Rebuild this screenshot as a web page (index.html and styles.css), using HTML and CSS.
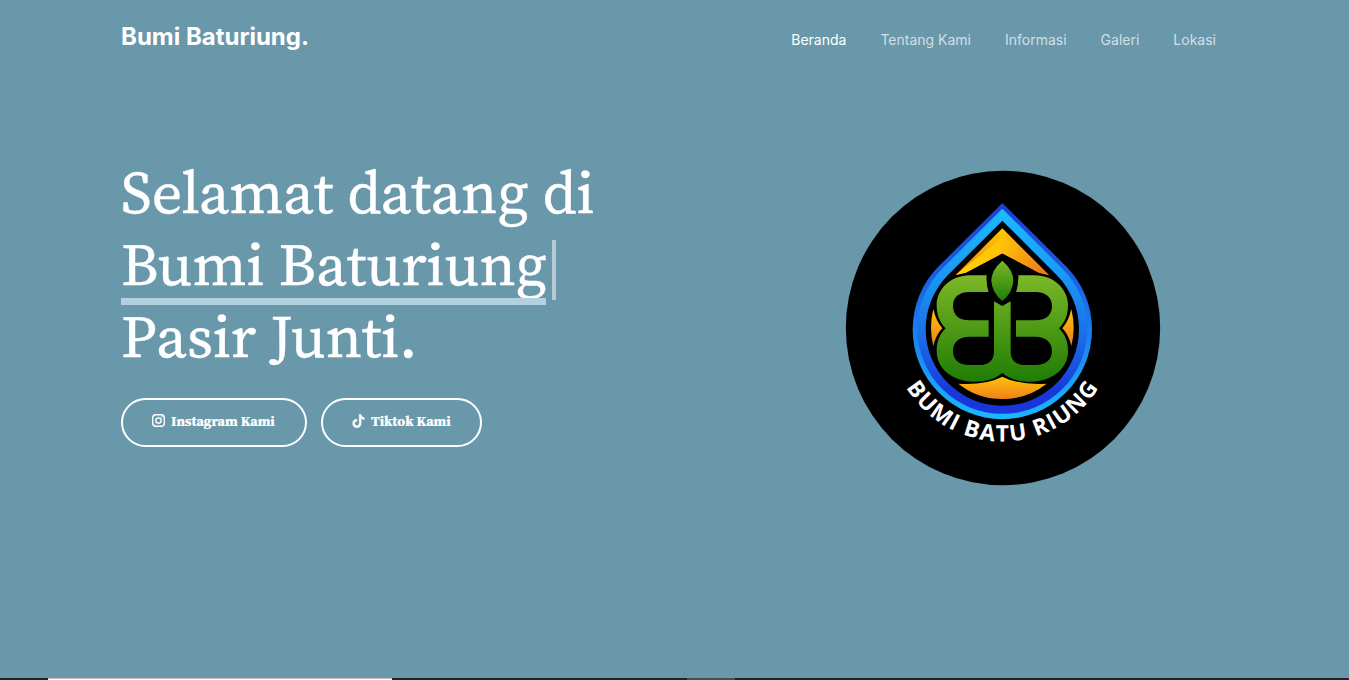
FILE: index.html
```
<!DOCTYPE html>
<html lang="id">
<head>
<meta charset="utf-8">
<title>Bumi Baturiung</title>
<link rel="stylesheet" href="styles.css">
</head>
<body>
<div class="page">
  <header class="header">
    <a class="brand">Bumi Baturiung.</a>
    <nav class="nav">
      <a class="nav-link active">Beranda</a>
      <a class="nav-link">Tentang Kami</a>
      <a class="nav-link">Informasi</a>
      <a class="nav-link">Galeri</a>
      <a class="nav-link">Lokasi</a>
    </nav>
  </header>
  <main class="hero">
    <div class="intro">
      <h1 class="title">
        <span class="line">Selamat datang di</span>
        <span class="line"><span class="typed">Bumi Baturiung</span><span class="cursor"></span></span>
        <span class="line">Pasir Junti.</span>
      </h1>
      <div class="actions">
        <a class="btn insta">
          <svg class="icon" viewBox="0 0 16 16" fill="none" stroke="currentColor" stroke-width="1.7"><rect x=".85" y=".85" width="14.3" height="14.3" rx="4"/><circle cx="8" cy="8" r="3.3"/><circle cx="12.3" cy="3.75" r="1" fill="currentColor" stroke="none"/></svg>
          <span class="label">Instagram Kami</span>
        </a>
        <a class="btn tiktok">
          <svg class="icon tall" viewBox="0 0 16 16" fill="currentColor"><path d="M9 0h1.98c.144.715.54 1.617 1.235 2.512C12.895 3.389 13.797 4 15 4v2c-1.753 0-3.07-.814-4-1.829V11a5 5 0 1 1-5-5v2a3 3 0 1 0 3 3z" stroke="currentColor" stroke-width=".9"/></svg>
          <span class="label">Tiktok Kami</span>
        </a>
      </div>
    </div>
    <svg class="emblem" viewBox="0 0 1020 1005">
      <defs>
        <linearGradient id="rim" x1="0" y1="0" x2="0" y2="1"><stop offset="0" stop-color="#1740d8"/><stop offset=".3" stop-color="#1b5be0"/><stop offset=".65" stop-color="#1a86f2"/><stop offset="1" stop-color="#1bb8ff"/></linearGradient>
        <linearGradient id="ring" x1="0" y1="0" x2="0" y2="1"><stop offset="0" stop-color="#1bbcff"/><stop offset=".3" stop-color="#1a9cf6"/><stop offset=".65" stop-color="#1a6ae6"/><stop offset=".9" stop-color="#1836da"/><stop offset="1" stop-color="#1836da"/></linearGradient>
        <linearGradient id="leaf" gradientUnits="userSpaceOnUse" x1="0" y1="346" x2="0" y2="665"><stop offset="0" stop-color="#7db728"/><stop offset="1" stop-color="#1e7d04"/></linearGradient>
        <linearGradient id="bud" x1="0" y1="0" x2="0" y2="1"><stop offset="0" stop-color="#7db728"/><stop offset="1" stop-color="#1e8008"/></linearGradient>
        <linearGradient id="gold" x1="0" y1="0" x2="0" y2="1"><stop offset="0" stop-color="#ffc20a"/><stop offset="1" stop-color="#f08018"/></linearGradient>
        <linearGradient id="roof" gradientUnits="userSpaceOnUse" x1="450" y1="240" x2="610" y2="345"><stop offset="0" stop-color="#ffd200"/><stop offset=".3" stop-color="#ffc008"/><stop offset="1" stop-color="#ee7c18"/></linearGradient>
        <linearGradient id="edge" gradientUnits="userSpaceOnUse" x1="502" y1="205" x2="502" y2="345"><stop offset="0" stop-color="#ffca08"/><stop offset="1" stop-color="#f08018"/></linearGradient>
        <path id="arc" d="M213 682A338 338 0 0 0 791 682"/>
      </defs>
      <circle cx="504" cy="504" r="471.5"/>
      <path fill="url(#rim)" d="M502 129L692 318A269 269 0 1 1 312 318Z"/>
      <path fill="url(#ring)" d="M502 146L683 327A255 255 0 1 1 321 327Z"/>
      <path d="M502 182L665 345A230 230 0 1 1 339 345Z"/>
      <path fill="url(#edge)" d="M502 205L642 345L612 338L502 280L392 338L362 345Z"/>
      <path fill="url(#roof)" d="M502 232L642 345L612 338L502 280L392 338L362 345Z"/>
      <path fill="url(#gold)" d="M295 447Q303 483 322 505Q303 524 295 558Q281 505 295 447Z"/>
      <path fill="url(#gold)" d="M709 447Q701 483 682 505Q701 524 709 558Q723 505 709 447Z"/>
      <path fill="url(#gold)" d="M370 671Q452 676 502 650Q552 676 635 671Q577 717 502 717Q427 717 370 671Z"/>
      <path fill="url(#leaf)" fill-rule="evenodd" d="M455 346H405C345 346 305 390 305 435C305 467 315 488 332 505C315 522 305 542 305 574C305 626 353 665 415 665C452 665 482 657 502 638C522 657 552 665 589 665C651 665 699 626 699 574C699 542 689 522 672 505C689 488 699 467 699 435C699 390 659 346 599 346H550Q551 375 543 396H600C636 396 651 415 651 438C651 462 636 481 600 481H543V530H600C636 530 651 550 651 573C651 597 635 615 600 615H570C545 615 527 602 527 575V424L502 438L477 424V575C477 602 459 615 434 615H404C369 615 354 597 354 573C354 550 368 530 404 530H461V481H404C368 481 354 462 354 438C354 415 368 396 404 396H461Q453 375 455 346Z"/>
      <path fill="url(#bud)" d="M502 302Q535 331 535 362Q533 397 502 423Q471 397 469 362Q469 331 502 302Z"/>
      <text class="motto" textLength="692" lengthAdjust="spacing"><textPath href="#arc" textLength="692">BUMI BATU RIUNG</textPath></text>
    </svg>
  </main>
  <footer class="strip"><span class="panel"></span><span class="handle"></span></footer>
</div>
</body>
</html>
```
FILE: styles.css
```
* { box-sizing: border-box; }
body { margin: 0; background: #6998ab; color: #fff; font-family: Inter, sans-serif; }
.page { height: 680px; display: flex; flex-direction: column; overflow: hidden; }
.header { height: 80px; padding: 22px 133px 0 121px; display: flex; justify-content: space-between; align-items: flex-start; }
.brand { font-size: 24px; font-weight: 700; line-height: 29px; }
.nav { display: flex; gap: 34px; padding-top: 7px; font-size: 14px; line-height: 21px; }
.nav-link { color: rgba(255, 255, 255, .7); }
.nav-link.active { color: #fff; }
.hero { flex: 1; display: flex; justify-content: space-between; align-items: flex-start; padding: 76px 174px 0 121px; }
.title { margin: 0; font: 400 60px/72px "Source Serif 4", "Source Serif Pro", "Liberation Serif", serif; -webkit-text-stroke: .4px #fff; }
.line { display: flex; white-space: nowrap; height: 72px; }
.typed { position: relative; width: 425px; }
.typed::after { content: ""; position: absolute; left: 0; right: 0; bottom: -5px; height: 7px; background: #b1d0e0; }
.cursor { width: 4px; height: 60px; margin: 12px 0 0 6px; background: #b4cbd5; }
.actions { display: flex; gap: 14px; margin-top: 26px; }
.btn { display: flex; align-items: center; gap: 6px; height: 49px; border: 2px solid #fff; border-radius: 25px; padding: 0 0 3px 29px; font: 700 14px/20px "Source Serif 4", "Source Serif Pro", "Liberation Serif", serif; white-space: nowrap; }
.insta { width: 186px; }
.tiktok { width: 161px; }
.label { -webkit-text-stroke: .2px #fff; }
.icon { width: 13px; height: 13px; margin-bottom: 1px; }
.tall { height: 14px; }
.emblem { width: 340px; height: 335px; margin-top: 4px; }
.motto { font: 700 68px "Open Sans", sans-serif; fill: #fff; }
.strip { height: 2px; background: #222; display: flex; padding-left: 48px; gap: 295px; }
.panel { width: 344px; background: #fff; border-top: 1px solid #c9bcc4; }
.handle { width: 48px; background: #4d4d4d; }
```
